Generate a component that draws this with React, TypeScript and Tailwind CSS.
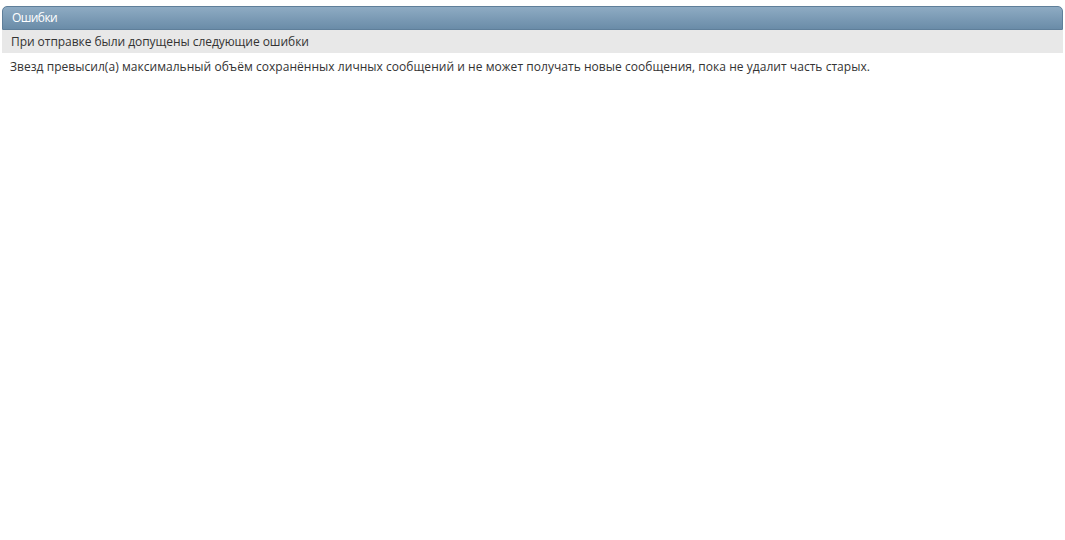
export default function App() {
  return (
    <div className="min-h-[540px] bg-white pt-[6px] px-[2px] font-['Open_Sans',sans-serif] text-[#333]">
      <div className="rounded-t-[5px] border border-[#5f7f9a] bg-gradient-to-b from-[#8eabc3] to-[#6a8ca8] h-[24px] flex items-center px-[9px]">
        <span className="text-[12px] font-medium tracking-[-0.6px] text-white">Ошибки</span>
      </div>
      <div className="bg-[#e8e8e8] h-[23px] flex items-center px-[9px] text-[12px] tracking-[-0.05px]">
        При отправке были допущены следующие ошибки
      </div>
      <div className="px-[8px] pt-[5px] text-[12px] tracking-[0.04px]">
        Звезд превысил(а) максимальный объём сохранённых личных сообщений и не может получать новые сообщения, пока не удалит часть старых.
      </div>
    </div>
  );
}
